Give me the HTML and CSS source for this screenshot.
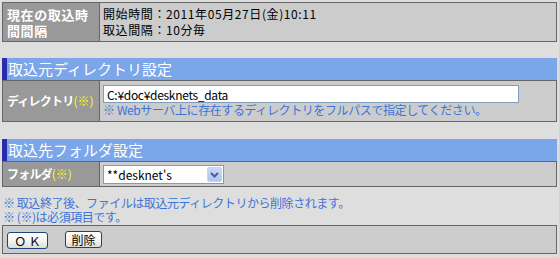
FILE: index.html
```html
<!DOCTYPE html>
<html lang="ja">
<head>
<meta charset="utf-8">
<title>取込設定</title>
<link rel="stylesheet" href="styles.css">
</head>
<body>
<div class="page">
  <div class="box box-info">
    <div class="label label-strong">現在の取込時間間隔</div>
    <div class="value value-info">開始時間：2011年05月27日(金)10:11<br>取込間隔：10分毎</div>
  </div>

  <h2 class="sec">取込元ディレクトリ設定</h2>
  <div class="box box-dir">
    <div class="label">ディレクトリ<span class="req">(※)</span></div>
    <div class="value value-dir">
      <input class="text" type="text" value="C:¥doc¥desknets_data">
      <div class="hint">※ Webサーバ上に存在するディレクトリをフルパスで指定してください。</div>
    </div>
  </div>

  <h2 class="sec sec-second">取込先フォルダ設定</h2>
  <div class="box box-folder">
    <div class="label">フォルダ<span class="req">(※)</span></div>
    <div class="value value-folder">
      <span class="select-wrap">
        <select class="select"><option>**desknet's</option></select>
        <span class="select-btn"><svg width="9" height="6" viewBox="0 0 9 6"><path d="M1 1 L4.5 4.5 L8 1" fill="none" stroke="#4d6185" stroke-width="2"/></svg></span>
      </span>
    </div>
  </div>

  <div class="notes">
    <div class="note-line">※ 取込終了後、ファイルは取込元ディレクトリから削除されます。</div>
    <div class="note-line">※ (※)は必須項目です。</div>
  </div>

  <div class="box box-buttons">
    <button class="btn btn-ok" type="button">Ｏ Ｋ</button>
    <button class="btn btn-del" type="button">削除</button>
  </div>
</div>
</body>
</html>
```

FILE: styles.css
```css
html, body {
  margin: 0;
  background: #dedede;
}

body {
  font-family: "Noto Sans CJK JP", "Noto Sans", sans-serif;
  font-size: 12px;
  color: #000;
}

.page {
  width: 555px;
  padding: 2px 2px 0 2px;
}

.box {
  display: flex;
  border: 1px solid #666;
  background: #ccc;
}

.label {
  width: 97px;
  flex: none;
  box-sizing: border-box;
  border-right: 1px solid #666;
  background: #999;
  color: #fff;
  font-weight: bold;
  display: flex;
  align-items: center;
  padding: 0 3px 0 4px;
  letter-spacing: -0.8px;
  line-height: 14px;
}

.label-strong {
  font-size: 13px;
  letter-spacing: 0.6px;
  line-height: 16px;
  padding-top: 1px;
}

.req {
  color: #ffff00;
  font-weight: normal;
  letter-spacing: 0;
}

.value {
  flex: 1;
  padding: 0 3px;
}

.value-info {
  padding-top: 3px;
  padding-bottom: 3px;
  line-height: 16px;
  letter-spacing: 0.6px;
}

.sec {
  margin: 16px 0 0;
  height: 22px;
  background: #7ba6e9;
  border-left: 5px solid #2b2bae;
  color: #fff;
  font-size: 15px;
  font-weight: normal;
  line-height: 22px;
  padding-left: 1px;
}

.sec-second {
  margin-top: 17px;
}

.value-dir {
  padding-top: 4px;
  padding-bottom: 4px;
}

.text {
  display: block;
  width: 416px;
  height: 18px;
  box-sizing: border-box;
  margin: 0;
  border: 1px solid #7f9db9;
  background: #fff;
  padding: 0 3px;
  font-family: "Noto Sans CJK JP", "Noto Sans", sans-serif;
  font-size: 12px;
  letter-spacing: -0.3px;
  color: #000;
}

.hint {
  color: #3c74d8;
  line-height: 14px;
  letter-spacing: -0.4px;
}

.value-folder {
  padding-top: 3px;
  padding-bottom: 2px;
}

.select-wrap {
  position: relative;
  display: inline-block;
  vertical-align: top;
}

.select {
  display: block;
  width: 121px;
  height: 19px;
  box-sizing: border-box;
  margin: 0;
  border: 1px solid #7f9db9;
  border-radius: 0;
  background: #fff;
  padding: 0 18px 0 3px;
  -webkit-appearance: none;
  appearance: none;
  font-family: "Noto Sans CJK JP", "Noto Sans", sans-serif;
  font-size: 12px;
  color: #000;
}

.select-btn {
  position: absolute;
  top: 2px;
  right: 2px;
  width: 15px;
  height: 15px;
  box-sizing: border-box;
  border: 1px solid #c3d3fd;
  border-radius: 2px;
  background: linear-gradient(#c8d8fb, #b0c4f3);
  display: flex;
  align-items: center;
  justify-content: center;
}

.notes {
  padding: 9px 1px 1px;
  color: #3c74d8;
  letter-spacing: -0.45px;
}

.note-line {
  height: 14px;
  line-height: 14px;
}

.box-buttons {
  padding: 5px 4px 4px;
  gap: 17px;
  align-items: flex-start;
}

.btn {
  height: 17px;
  margin: 0;
  box-sizing: border-box;
  border: 1px solid #1c4678;
  border-radius: 3px;
  background: linear-gradient(#ffffff, #f2f2ee 60%, #dcdcd4);
  font-family: "Noto Sans CJK JP", "Noto Sans", sans-serif;
  font-size: 12px;
  line-height: 14px;
  color: #000;
  padding: 0;
}

.btn-ok {
  width: 41px;
  margin-top: 1px;
}

.btn-del {
  width: 37px;
}
```
